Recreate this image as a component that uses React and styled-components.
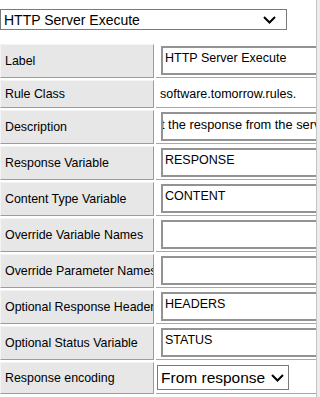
import React from 'react';
import styled, { createGlobalStyle } from 'styled-components';

const GlobalStyle = createGlobalStyle`
  html, body {
    margin: 0;
    padding: 0;
    background: #fff;
    font-family: "Liberation Sans", Arial, sans-serif;
    color: #000;
  }
`;

const Page = styled.div`
  display: flex;
  width: 320px;
  height: 397px;
  overflow: hidden;
`;

const Content = styled.div`
  width: 316px;
  overflow: hidden;
`;

const ScrollTrack = styled.div`
  width: 3px;
  border-left: 1px solid #c4c4c4;
  background: #ececec;
`;

const DropDown = styled.div`
  display: flex;
  align-items: center;
  justify-content: space-between;
  box-sizing: border-box;
  width: ${p => p.width}px;
  height: ${p => p.height}px;
  margin-top: ${p => p.top || 0}px;
  padding: 0 ${p => p.right}px 0 3px;
  border: 1px solid #7a7a7a;
  background: #fff;
  font-size: ${p => p.size}px;
  white-space: nowrap;
`;

const Table = styled.div`
  display: flex;
  flex-direction: column;
  gap: 2px;
  margin-top: 14px;
`;

const Row = styled.div`
  display: flex;
  gap: 2px;
  height: ${p => p.height}px;
`;

const LabelCell = styled.div`
  flex: 0 0 154px;
  box-sizing: border-box;
  display: flex;
  align-items: center;
  padding-left: 4px;
  background: #e7e7e7;
  border: 1px solid;
  border-color: #f4f4f4 #9c9c9c #9c9c9c #f4f4f4;
  font-size: 12.4px;
  white-space: nowrap;
  overflow: hidden;
`;

const ValueCell = styled.div`
  flex: 1;
  min-width: 0;
  box-sizing: border-box;
  display: flex;
  align-items: center;
  padding-left: ${p => p.pad}px;
  border-bottom: 1px solid #a8a8a8;
  font-size: 12.5px;
  white-space: nowrap;
  overflow: hidden;
`;

const TextBox = styled.input`
  flex: 0 0 180px;
  box-sizing: border-box;
  height: 29px;
  margin: 0;
  padding: 0 0 5px 2px;
  border: 2px solid #939393;
  border-right: none;
  outline: none;
  background: #fff;
  font-family: "Liberation Sans", Arial, sans-serif;
  font-size: 12.5px;
  color: #000;
`;

const ScrolledBox = styled.div`
  flex: 0 0 180px;
  box-sizing: border-box;
  height: 29px;
  display: flex;
  align-items: center;
  padding-bottom: 4px;
  border: 2px solid #939393;
  border-right: none;
  overflow: hidden;
  font-size: 12.8px;
`;

const Shifted = styled.span`
  margin-left: -2px;
`;

const Chevron = () => (
  <svg width="13" height="8" viewBox="0 0 13 8">
    <path d="M1 1 L6.5 6.5 L12 1" fill="none" stroke="#000" strokeWidth="2" />
  </svg>
);

const fields = [
  { label: 'Label', value: 'HTTP Server Execute' },
  { label: 'Rule Class', text: 'software.tomorrow.rules.' },
  { label: 'Description', scrolled: 't the response from the server' },
  { label: 'Response Variable', value: 'RESPONSE' },
  { label: 'Content Type Variable', value: 'CONTENT' },
  { label: 'Override Variable Names', value: '' },
  { label: 'Override Parameter Names', value: '' },
  { label: 'Optional Response Headers', value: 'HEADERS' },
  { label: 'Optional Status Variable', value: 'STATUS' },
];

export default function App() {
  return (
    <Page>
      <GlobalStyle />
      <Content>
        <DropDown width={287} height={21} size={14} top={9} right={10}>
          HTTP Server Execute
          <Chevron />
        </DropDown>
        <Table>
          {fields.map(f => (
            <Row key={f.label} height={f.text ? 28 : 34}>
              <LabelCell>{f.label}</LabelCell>
              <ValueCell pad={f.text ? 4 : 5}>
                {f.text}
                {f.scrolled && (
                  <ScrolledBox>
                    <Shifted>{f.scrolled}</Shifted>
                  </ScrolledBox>
                )}
                {f.value !== undefined && <TextBox readOnly value={f.value} />}
              </ValueCell>
            </Row>
          ))}
          <Row height={32}>
            <LabelCell>Response encoding</LabelCell>
            <ValueCell pad={1}>
              <DropDown width={132} height={25} size={15.5} right={4}>
                From response
                <Chevron />
              </DropDown>
            </ValueCell>
          </Row>
        </Table>
      </Content>
      <ScrollTrack />
    </Page>
  );
}
